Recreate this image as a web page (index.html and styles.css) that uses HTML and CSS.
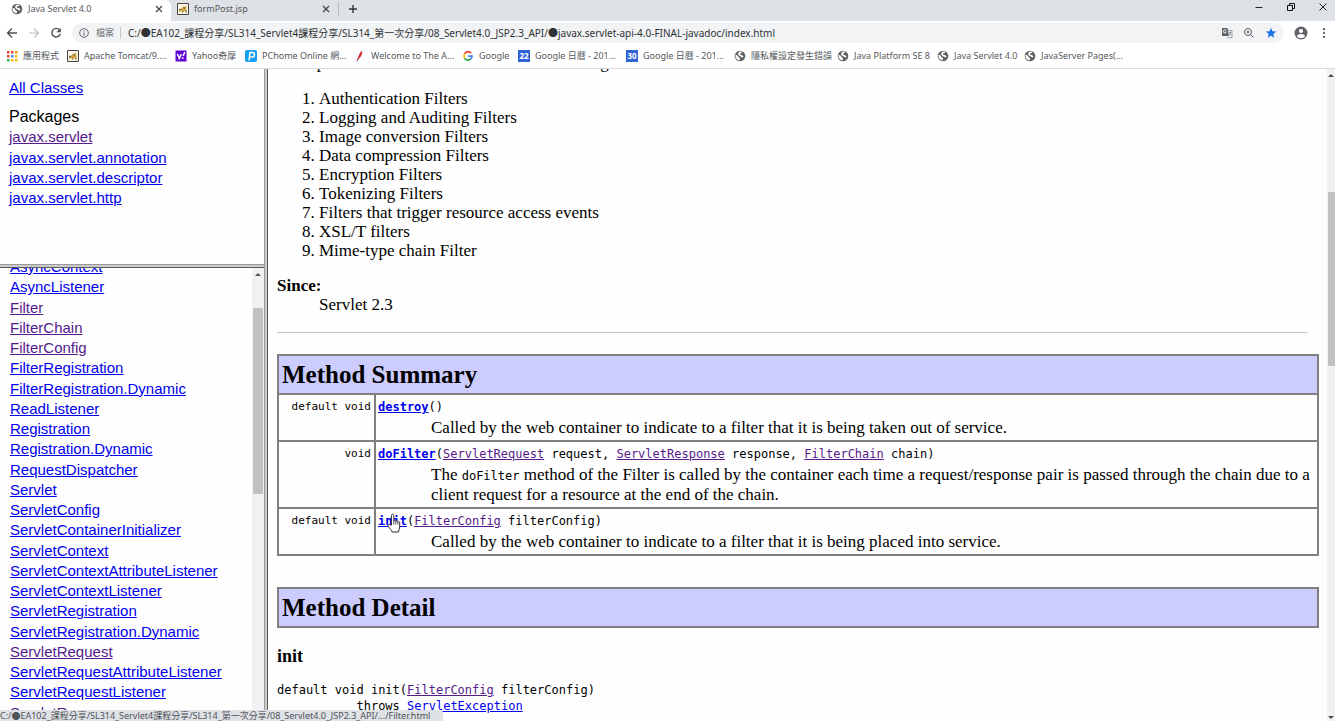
FILE: index.html
```html
<!DOCTYPE html>
<html lang="zh-Hant">
<head>
<meta charset="utf-8">
<title>Java Servlet 4.0</title>
<link rel="stylesheet" href="styles.css">
</head>
<body>
<svg class="defs" aria-hidden="true">
  <symbol id="globe" viewBox="0 0 12 12"><circle cx="6" cy="6" r="5.3" fill="#5f6368"/><path d="M1.400 4.600 3.800 5.800 4.600 7.300 6 8 5.600 10.400 3.600 9.800 1.700 7.800zM5 1.700 8.400 1.600 7.600 3 6 3.400 6.200 4.700 8 5 9.600 6.800 8.400 7.600 6.600 6.600 5 5.600 4 4.200z" fill="#fff"/></symbol>
  <symbol id="tomcat" viewBox="0 0 12 12"><path d="M.5.5h11v11H.5z" fill="#fbf6e4" stroke="#444"/><path d="M2 6.500 4 6 5.300 4.800 6 3 7.200 4 9.500 2.600 9.200 6 10 8.500 7.500 8 5 9.500 4.600 8 2 9z" fill="#d2a344"/><path d="M2 6.400 4.300 6.200M5 9.400 6.200 8.400M8 8.600 9.800 9.200M6.500 5h1.600" stroke="#333" stroke-width=".8" fill="none"/></symbol>
  <symbol id="close" viewBox="0 0 8 8"><path d="m1 1 6 6M7 1 1 7" stroke="#444" stroke-width="1.200"/></symbol>
</svg>
<header class="browser">
  <div class="tabs">
    <div class="tab active"><svg class="ico"><use href="#globe"/></svg><span>Java Servlet 4.0</span><button aria-label="Close tab"><svg class="x"><use href="#close"/></svg></button></div>
    <div class="tab"><svg class="ico"><use href="#tomcat"/></svg><span>formPost.jsp</span><button aria-label="Close tab"><svg class="x"><use href="#close"/></svg></button></div>
    <button class="new-tab" aria-label="New tab"><svg width="10" height="10" viewBox="0 0 10 10"><path d="M5 1v8M1 5h8" stroke="#333" stroke-width="1.400"/></svg></button>
    <div class="window-controls">
      <button aria-label="Minimize"><svg width="10" height="10" viewBox="0 0 10 10"><path d="M1.500 5.500h7" stroke="#222"/></svg></button>
      <button aria-label="Restore"><svg width="10" height="10" viewBox="0 0 10 10"><path d="M1.500 3.500h5v5h-5zM3.500 3.500v-2h5v5h-2" fill="none" stroke="#111"/></svg></button>
      <button aria-label="Close"><svg width="10" height="10" viewBox="0 0 10 10"><path d="m1.500 1.500 7 7m0-7-7 7" stroke="#222"/></svg></button>
    </div>
  </div>
  <div class="toolbar">
    <button aria-label="Back"><svg width="12" height="12" viewBox="0 0 12 12"><path d="M11 6H1.800M6 1.500 1.500 6 6 10.500" fill="none" stroke="#4a4d51" stroke-width="1.300"/></svg></button>
    <button aria-label="Forward"><svg width="12" height="12" viewBox="0 0 12 12"><path d="M1 6h9.200M6 1.500 10.500 6 6 10.500" fill="none" stroke="#babcbe" stroke-width="1.200"/></svg></button>
    <button aria-label="Reload"><svg width="12" height="12" viewBox="0 0 12 12"><path d="M9.600 3A4.300 4.300 0 1 0 10.300 7" fill="none" stroke="#4a4d51" stroke-width="1.400"/><path d="M10.800 1v4.300H6.500z" fill="#4a4d51"/></svg></button>
    <div class="omnibox">
      <svg width="10" height="10" viewBox="0 0 10 10"><circle cx="5" cy="5" r="4.300" fill="none" stroke="#5f6368"/><path d="M5 4.400v3M5 2.400v1.200" stroke="#5f6368" stroke-width="1.100"/></svg>
      <label for="url">檔案</label>
      <input id="url" type="text" value="C:/●EA102_課程分享/SL314_Servlet4課程分享/SL314_第一次分享/08_Servlet4.0_JSP2.3_API/●javax.servlet-api-4.0-FINAL-javadoc/index.html">
      <button aria-label="Translate"><svg width="12" height="12" viewBox="0 0 12 12"><path d="M1 1h5.500l1.500 8H1z" fill="#5f6368"/><path d="M7 3.500h4v7.200H6.200M8 5.500h2.500M9.200 4.500v1M10 5.500 7.600 8.500M8.200 6.500l2 2" fill="none" stroke="#8a8d91" stroke-width=".8"/><path d="M5.200 3.600A1.600 1.600 0 1 0 5.300 5H3.900" fill="none" stroke="#fff" stroke-width=".9"/></svg></button>
      <button aria-label="Zoom"><svg width="12" height="12" viewBox="0 0 12 12"><circle cx="5" cy="5" r="3.500" fill="none" stroke="#5f6368"/><path d="m7.600 7.600 3 3M3.500 5h3M5 3.500v3" stroke="#5f6368"/></svg></button>
      <button aria-label="Bookmark"><svg width="12" height="12" viewBox="0 0 12 12"><path d="m6 .8 1.400 3.500 3.800.3-2.900 2.400.9 3.700L6 8.700l-3.200 2 .9-3.700L.8 4.600l3.800-.3z" fill="#1a73e8"/></svg></button>
    </div>
    <button aria-label="Profile"><svg width="14" height="14" viewBox="0 0 14 14"><circle cx="7" cy="7" r="6.500" fill="#5f6368"/><circle cx="7" cy="5" r="2.100" fill="#fff"/><path d="M2.900 10.200c1-3 7.200-3 8.200 0-2 2.600-6.200 2.600-8.200 0z" fill="#fff"/></svg></button>
    <button aria-label="Menu"><svg width="12" height="12" viewBox="0 0 12 12"><g fill="#4a4d51"><circle cx="6" cy="2.200" r="1.100"/><circle cx="6" cy="6" r="1.100"/><circle cx="6" cy="9.800" r="1.100"/></g></svg></button>
  </div>
  <nav class="bookmarks">
    <a href="#"><svg class="ico" viewBox="0 0 12 12"><path d="M1 1h2.500v2.500H1zM1 5h2.500v2.500H1z" fill="#ea4335"/><path d="M5 1h2.500v2.500H5z" fill="#ea4335"/><path d="M9 1h2.500v2.500H9z" fill="#f29900"/><path d="M5 5h2.500v2.500H5z" fill="#4285f4"/><path d="M9 5h2.500v2.500H9zM5 9h2.500v2.500H5z" fill="#fbbc04"/><path d="M1 9h2.500v2.500H1z" fill="#34a853"/><path d="M9 9h2.500v2.500H9z" fill="#fbbc04"/></svg>應用程式</a>
    <a href="#"><svg class="ico"><use href="#tomcat"/></svg>Apache Tomcat/9....</a>
    <a href="#"><svg class="ico" viewBox="0 0 12 12"><path d="M.5.5h11v11H.5z" fill="#5f01d1"/><path d="m2.300 4 2 3.800M6.300 4 3.800 9.500M9.800 2 8.200 6" fill="none" stroke="#fff" stroke-width="1.500"/><circle cx="7.700" cy="8" r=".9" fill="#fff"/></svg>Yahoo奇摩</a>
    <a href="#"><svg class="ico" viewBox="0 0 12 12"><rect width="12" height="12" rx="2" fill="#18a0f0"/><path d="M4 10.500 5 2.500h2.200a2 2 0 0 1 0 4.500H4.600" fill="none" stroke="#fff" stroke-width="1.500"/></svg>PChome Online 網...</a>
    <a href="#"><svg class="ico" viewBox="0 0 12 12"><path d="M8.300 1C5.500 2 5 5.500 4 8L3 11.300 5.300 8.300C7 7 8.600 3.500 8.300 1z" fill="#d22128"/><path d="M4 8 3 11.300" stroke="#7b3a80" stroke-width=".8"/></svg>Welcome to The A...</a>
    <a href="#"><svg class="ico" viewBox="0 0 12 12"><g fill="none" stroke-width="1.700"><path d="M9.200 3.100A4 4 0 0 0 2.600 3.800" stroke="#ea4335"/><path d="M2.600 3.800a4.300 4.300 0 0 0 0 4.400" stroke="#fbbc04"/><path d="M2.600 8.200a4 4 0 0 0 6 1" stroke="#34a853"/><path d="M8.600 9.200A4 4 0 0 0 10 6.200H6.200" stroke="#4285f4"/></g></svg>Google</a>
    <a href="#"><span class="cal">22</span>Google 日曆 - 201...</a>
    <a href="#"><span class="cal">30</span>Google 日曆 - 201...</a>
    <a href="#"><svg class="ico"><use href="#globe"/></svg>隱私權設定發生錯誤</a>
    <a href="#"><svg class="ico"><use href="#globe"/></svg>Java Platform SE 8</a>
    <a href="#"><svg class="ico"><use href="#globe"/></svg>Java Servlet 4.0</a>
    <a href="#"><svg class="ico"><use href="#globe"/></svg>JavaServer Pages(...</a>
  </nav>
</header>
<div class="frames">
  <aside class="left">
    <nav class="packages">
      <a href="#">All Classes</a>
      <h2>Packages</h2>
      <ul>
        <li><a class="seen" href="#">javax.servlet</a></li>
        <li><a href="#">javax.servlet.annotation</a></li>
        <li><a href="#">javax.servlet.descriptor</a></li>
        <li><a href="#">javax.servlet.http</a></li>
      </ul>
    </nav>
    <div class="split-row"></div>
    <div class="classes">
      <ul>
        <li><a href="#">AsyncContext</a></li>
        <li><a href="#">AsyncListener</a></li>
        <li><a class="seen" href="#">Filter</a></li>
        <li><a class="seen" href="#">FilterChain</a></li>
        <li><a class="seen" href="#">FilterConfig</a></li>
        <li><a href="#">FilterRegistration</a></li>
        <li><a href="#">FilterRegistration.Dynamic</a></li>
        <li><a href="#">ReadListener</a></li>
        <li><a href="#">Registration</a></li>
        <li><a href="#">Registration.Dynamic</a></li>
        <li><a href="#">RequestDispatcher</a></li>
        <li><a href="#">Servlet</a></li>
        <li><a href="#">ServletConfig</a></li>
        <li><a href="#">ServletContainerInitializer</a></li>
        <li><a href="#">ServletContext</a></li>
        <li><a href="#">ServletContextAttributeListener</a></li>
        <li><a href="#">ServletContextListener</a></li>
        <li><a href="#">ServletRegistration</a></li>
        <li><a href="#">ServletRegistration.Dynamic</a></li>
        <li><a class="seen" href="#">ServletRequest</a></li>
        <li><a href="#">ServletRequestAttributeListener</a></li>
        <li><a href="#">ServletRequestListener</a></li>
        <li><a class="seen" href="#">ServletResponse</a></li>
      </ul>
      <div class="scrollbar"><span class="up"></span><span class="thumb"></span><span class="down"></span></div>
    </div>
  </aside>
  <div class="split-col"></div>
  <main class="doc">
    <div class="content">
      <p>Examples that have been identified for this design are:</p>
      <ol>
        <li>Authentication Filters</li>
        <li>Logging and Auditing Filters</li>
        <li>Image conversion Filters</li>
        <li>Data compression Filters</li>
        <li>Encryption Filters</li>
        <li>Tokenizing Filters</li>
        <li>Filters that trigger resource access events</li>
        <li>XSL/T filters</li>
        <li>Mime-type chain Filter</li>
      </ol>
      <dl>
        <dt>Since:</dt>
        <dd>Servlet 2.3</dd>
      </dl>
      <hr>
      <table class="summary">
        <thead><tr><th colspan="2">Method Summary</th></tr></thead>
        <tbody>
          <tr><td class="type">default void</td><td><code><a class="name" href="#">destroy</a>()</code><p>Called by the web container to indicate to a filter that it is being taken out of service.</p></td></tr>
          <tr><td class="type">void</td><td><code><a class="name" href="#">doFilter</a>(<a class="seen" href="#">ServletRequest</a> request, <a class="seen" href="#">ServletResponse</a> response, <a class="seen" href="#">FilterChain</a> chain)</code><p>The <code>doFilter</code> method of the Filter is called by the container each time a request/response pair is passed through the chain due to a client request for a resource at the end of the chain.</p></td></tr>
          <tr><td class="type">default void</td><td><code><a class="name target" href="#">init<svg class="hand" viewBox="0 0 14 20"><path d="M4.500 12V2.500c0-1.800 2.300-1.800 2.300 0V8c.3-1 2-.8 2 .4.400-.9 2-.6 2 .5.500-.7 1.900-.3 1.900.7V14c0 2-1.200 3-1.200 5H5c0-1.800-2.500-3.300-3.700-5.800-.7-1.400.9-2.300 1.800-1.200z" fill="#fff" stroke="#333"/><path d="M6.800 8v3.500M8.800 8.400v3.100M10.800 9v2.500" stroke="#333" stroke-width=".8"/></svg></a>(<a class="seen" href="#">FilterConfig</a> filterConfig)</code><p>Called by the web container to indicate to a filter that it is being placed into service.</p></td></tr>
        </tbody>
      </table>
      <h2 class="band">Method Detail</h2>
      <h3>init</h3>
      <pre>default void init(<a class="seen" href="#">FilterConfig</a> filterConfig)
           throws <a href="#">ServletException</a></pre>
    </div>
    <div class="scrollbar"><span class="up"></span><span class="thumb"></span><span class="down"></span></div>
  </main>
</div>
<div class="status">C:/●EA102_課程分享/SL314_Servlet4課程分享/SL314_第一次分享/08_Servlet4.0_JSP2.3_API/.../Filter.html</div>
</body>
</html>
```

FILE: styles.css
```css
* { box-sizing: border-box; }
body {
  margin: 0;
  height: 100vh;
  display: flex;
  flex-direction: column;
  overflow: hidden;
  background: #fefefe;
  color: #000;
}
button { border: 0; padding: 0; background: none; display: flex; align-items: center; justify-content: center; }
a { color: #00e; }
a.seen { color: #551a8b; }
ul { list-style: none; margin: 0; padding: 0; }
.defs { position: absolute; width: 0; height: 0; }
.ico { width: 12px; height: 12px; flex: none; }

/* browser chrome */
.browser {
  flex: none;
  border-bottom: 1px solid #dadce0;
  background: #fff;
  font: 9px/12px "Noto Sans", "Noto Sans CJK TC", sans-serif;
  color: #55585c;
}
.tabs { display: flex; height: 21px; background: #dee1e6; }
.tab { display: flex; align-items: center; width: 167px; padding: 0 8px 3px 6px; gap: 5px; }
.tab.active { width: 171px; padding-left: 11px; background: #fff; border-radius: 0 6px 0 0; }
.tab span { flex: 1; }
.x { width: 8px; height: 8px; }
.new-tab { width: 28px; height: 14px; margin-top: 2px; border-left: 1px solid #b8bbc0; }
.window-controls { display: flex; margin-left: auto; gap: 22px; padding: 0 7px 7px 0; }
.toolbar { display: flex; align-items: center; height: 24px; padding: 0 5px 0 6px; gap: 10px; }
.omnibox {
  flex: 1;
  display: flex;
  align-items: center;
  height: 20px;
  padding: 0 7px;
  gap: 7px;
  border-radius: 10px;
  background: #f1f3f4;
}
.omnibox label { color: #6b6e72; padding-right: 6px; border-right: 1px solid #c3c6cb; }
.omnibox input {
  flex: 1;
  min-width: 0;
  padding: 0;
  border: 0;
  background: none;
  font: 10px/16px "Noto Sans", "Noto Sans CJK TC", sans-serif;
  color: #303236;
}
.omnibox button { margin-left: 3px; }
.bookmarks {
  display: grid;
  grid-template-columns: 61px 108px 70px 109px 108px 56px 108px 108px 103px 100px 87px 1fr;
  height: 23px;
  padding: 0 0 1px 6px;
  align-items: center;
  white-space: nowrap;
}
.bookmarks a { display: flex; align-items: center; gap: 5px; color: #55585c; text-decoration: none; }
.cal { width: 12px; height: 12px; background: #2f63d8; color: #fff; font-size: 8px; font-weight: bold; text-align: center; }

/* frameset */
.frames { flex: 1; min-height: 0; display: flex; }
.left { width: 264px; flex: none; display: flex; flex-direction: column; font: 15px/1.35 "Liberation Sans", Arial, sans-serif; }
.split-row { flex: none; height: 4px; background: #cbcbcb; border: solid #9a9a9a; border-width: 1px 0; border-bottom-color: #5c5c5c; }
.split-col { flex: none; width: 4px; background: #cbcbcb; border: solid #9a9a9a; border-width: 0 1px; border-right-color: #5c5c5c; }
.packages { flex: none; height: 195px; padding: 9px 9px 0; }
.packages h2 { margin: 9px 0 0; font: inherit; font-size: 16px; line-height: 20px; }
.classes { flex: 1; min-height: 0; display: flex; justify-content: space-between; overflow: hidden; }
.classes ul { margin: -11px 0 0 10px; }

.scrollbar { flex: none; display: flex; flex-direction: column; align-items: center; background: #f1f1f3; overflow: hidden; }
.classes .scrollbar { width: 12px; padding: 5px 0; }
.classes .thumb { width: 10px; height: 186px; margin-top: 32px; }
.doc .scrollbar { width: 8px; padding: 5px 0 2px; }
.doc .thumb { width: 7px; height: 174px; margin-top: 115px; }
.thumb { background: #c1c1c3; }
.up, .down { border: 3px solid transparent; }
.up { border-top: 0; border-bottom-color: #505050; }
.down { border-bottom: 0; border-top-color: #505050; margin-top: auto; }

/* documentation frame */
.doc { flex: 1; min-width: 0; display: flex; overflow: hidden; font: 17px/19px "Liberation Serif", "Times New Roman", serif; }
.content { flex: 1; min-width: 0; margin-top: -16px; padding: 0 8px 0 9px; }
.content > p { margin: 0 0 17px; }
ol { margin: 0; padding-left: 42px; }
dl { margin: 16px 0 18px; }
dt { font-weight: bold; }
dd { margin-left: 42px; }
hr { margin: 0 11px 21px 0; border: 0; border-top: 1px solid #c4c4c4; }
code, pre { font: 12px/17px "DejaVu Sans Mono", monospace; }
.summary { width: 100%; border-collapse: collapse; }
.summary th, .summary td { border: 2px solid #808080; }
.summary th, .band { background: #ccf; text-align: left; font-size: 25px; font-weight: bold; line-height: 29px; padding: 4px 3px; }
.summary td { padding: 1px 2px 3px; vertical-align: top; }
.summary td p { margin: 2px 0 0 53px; }
.summary .type { width: 97px; padding-right: 3px; text-align: right; white-space: nowrap; font: 11px/22px "DejaVu Sans Mono", monospace; }
.name { font-weight: bold; }
.target { position: relative; }
.hand { position: absolute; left: 9px; top: -1px; width: 14px; height: 20px; }
.band { margin: 31px 0 18px; border: 2px solid #808080; }
h3 { margin: 0; font-size: 18px; line-height: 20px; }
pre { margin: 16px 0 0; line-height: 16px; }

.status {
  position: absolute;
  left: 0;
  bottom: 0;
  width: 443px;
  height: 11px;
  overflow: hidden;
  border-radius: 0 3px 0 0;
  background: #dee1e6;
  color: #505358;
  font: 9px/12px "Noto Sans", "Noto Sans CJK TC", sans-serif;
  white-space: nowrap;
}
```
